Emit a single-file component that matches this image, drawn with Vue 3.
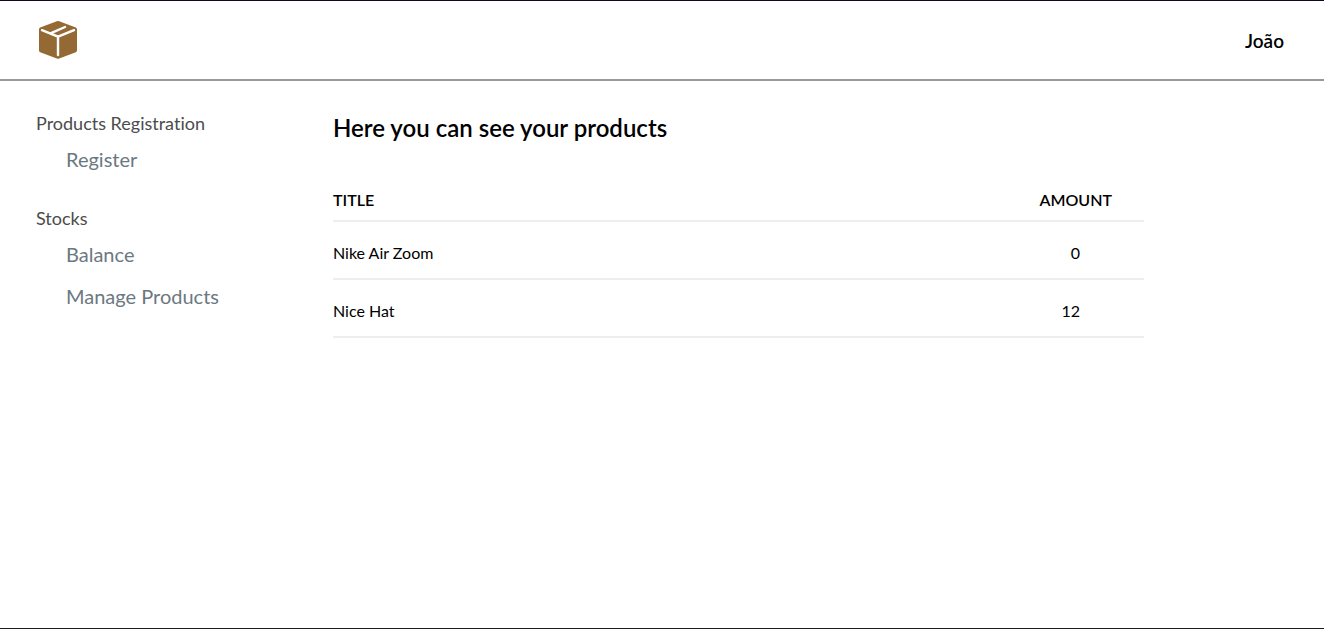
<script setup>
const user = 'João'

const sections = [
  { id: 'registration', title: 'Products Registration', links: ['Register'] },
  { id: 'stocks', title: 'Stocks', links: ['Balance', 'Manage Products'] },
]

const products = [
  { title: 'Nike Air Zoom', amount: 0 },
  { title: 'Nice Hat', amount: 12 },
]
</script>

<template>
  <div class="page">
    <header class="header">
      <a class="brand" href="#" aria-label="Home">
        <svg class="logo" viewBox="0 0 38 38" aria-hidden="true">
          <path
            class="box"
            d="M17.8 .3Q19 -.2 20.2 .3L36.8 6.6Q38 7.2 38 8.6V29.4Q38 30.7 36.8 31.2L20.2 37.6Q19 38.1 17.8 37.6L1.2 31.2Q0 30.7 0 29.4V8.6Q0 7.2 1.2 6.6Z"
          />
          <path class="tape" d="M3 9.2L19 15.6L35 9.2M19 15.6V34M11.5 12.3L26 6" />
        </svg>
      </a>
      <strong class="user">{{ user }}</strong>
    </header>

    <div class="body">
      <nav class="sidebar" aria-label="Main">
        <section v-for="section in sections" :key="section.id" class="group">
          <h2 class="group-title">{{ section.title }}</h2>
          <ul class="links">
            <li v-for="link in section.links" :key="link">
              <a class="link" href="#">{{ link }}</a>
            </li>
          </ul>
        </section>
      </nav>

      <main class="content">
        <h1 class="heading">Here you can see your products</h1>
        <table class="products">
          <thead>
            <tr>
              <th scope="col">TITLE</th>
              <th scope="col" class="amount">AMOUNT</th>
            </tr>
          </thead>
          <tbody>
            <tr v-for="product in products" :key="product.title">
              <td>{{ product.title }}</td>
              <td class="amount">{{ product.amount }}</td>
            </tr>
          </tbody>
        </table>
      </main>
    </div>
  </div>
</template>

<style>
body {
  background: #fff;
}
</style>

<style scoped>
.page {
  box-sizing: border-box;
  display: flex;
  flex-direction: column;
  min-height: 100vh;
  border-top: 1px solid #14061f;
  border-bottom: 1px solid #1f1b1f;
  color: #000;
  font-family: Lato, sans-serif;
  font-variant-ligatures: none;
}

.header {
  display: flex;
  align-items: center;
  justify-content: space-between;
  padding: 20px 40px 20px 39px;
  border-bottom: 2px solid #999;
}

.brand,
.logo {
  display: block;
}

.logo {
  width: 38px;
  height: 38px;
}

.box {
  fill: #956934;
}

.tape {
  fill: none;
  stroke: #fff;
  stroke-width: 2.4;
  stroke-linecap: round;
}

.user {
  padding-top: 2px;
  font-size: 19px;
  line-height: 24px;
  font-weight: 600;
}

.body {
  display: flex;
  flex: 1;
}

.sidebar {
  flex: 0 0 297px;
  padding: 31px 0 0 36px;
  box-sizing: border-box;
}

.group {
  margin-bottom: 36px;
}

.group-title {
  margin: 0;
  color: #4c4c4c;
  font-size: 18px;
  line-height: 22px;
  font-weight: 400;
}

.links {
  display: flex;
  flex-direction: column;
  gap: 18px;
  margin: 13px 0 0;
  padding: 0 0 0 30px;
  list-style: none;
}

.link {
  display: block;
  color: #6c7880;
  font-size: 20px;
  line-height: 24px;
  font-weight: 400;
  text-decoration: none;
}

.content {
  flex: 1;
  padding: 31px 180px 32px 36px;
}

.heading {
  margin: 0 0 41px;
  font-size: 24px;
  line-height: 32px;
  font-weight: 600;
}

.products {
  width: 100%;
  border-collapse: separate;
  border-spacing: 0;
  font-size: 16px;
  line-height: 20px;
}

.products th,
.products td {
  border-bottom: 2px solid #eee;
  text-align: left;
}

.products th {
  padding: 5px 0 10px;
  font-weight: 600;
}

.products td {
  padding: 21px 0 15px;
}

.products .amount {
  text-align: right;
}

.products th.amount {
  padding-right: 32px;
}

.products td.amount {
  padding-right: 64px;
}
</style>
